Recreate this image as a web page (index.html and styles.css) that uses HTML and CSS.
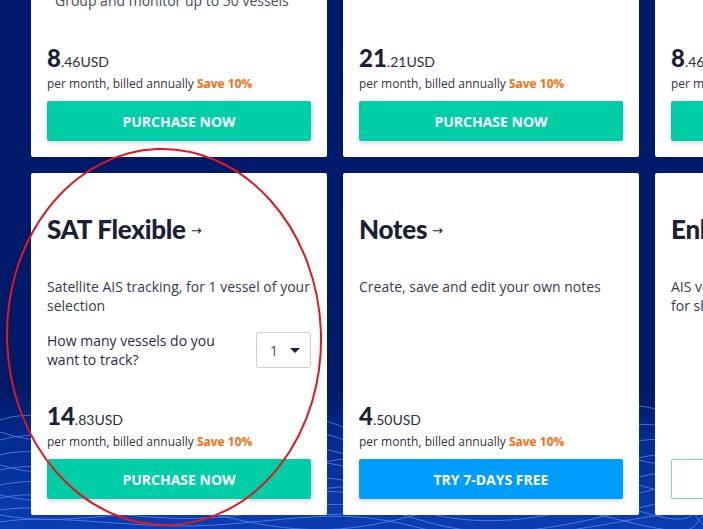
FILE: index.html
```html
<!DOCTYPE html>
<html lang="en">
<head>
<meta charset="utf-8">
<title>Plans</title>
<link rel="stylesheet" href="styles.css">
</head>
<body>
<div class="page">
  <svg class="waves" viewBox="0 0 703 529" preserveAspectRatio="none" aria-hidden="true">
    <defs>
      <linearGradient id="bg" x1="0" y1="0" x2="0" y2="1">
        <stop offset="0" stop-color="#001a6a"/>
        <stop offset="0.74" stop-color="#001a6a"/>
        <stop offset="0.84" stop-color="#042c92"/>
        <stop offset="1" stop-color="#0c3db0"/>
      </linearGradient>
    </defs>
    <rect x="0" y="0" width="703" height="529" fill="url(#bg)"/>
    <g fill="none" stroke="#6a98ff" stroke-width="0.9" opacity="0.7">
      <path d="M0 420 C60 400 110 450 170 430 S280 400 350 430 S480 460 560 425 S660 410 703 430"/>
      <path d="M0 440 C70 420 120 470 190 445 S300 420 370 450 S500 470 580 440 S670 430 703 445"/>
      <path d="M0 455 C50 440 130 480 200 460 S310 440 380 465 S510 485 590 455 S680 445 703 460"/>
      <path d="M0 470 C60 455 140 495 210 475 S320 455 390 480 S520 500 600 470 S690 460 703 475"/>
      <path d="M0 485 C70 470 150 505 220 490 S330 470 400 495 S530 510 610 485 S690 478 703 490"/>
      <path d="M0 498 C60 485 140 515 230 502 S340 485 410 508 S540 520 620 498 S690 490 703 502"/>
      <path d="M0 510 C70 500 150 528 240 515 S350 498 420 520 S550 530 630 510 S690 505 703 515"/>
      <path d="M0 522 C60 512 140 532 230 524 S350 510 420 528 S550 534 630 520 S690 516 703 524"/>
      <path d="M0 432 C80 460 130 410 210 440 S330 470 400 440 S520 410 600 445 S680 460 703 440"/>
      <path d="M0 465 C80 490 140 445 220 470 S340 495 410 468 S530 445 610 475 S680 488 703 468"/>
      <path d="M0 495 C80 515 150 480 230 500 S350 520 420 497 S540 478 620 505 S690 515 703 498"/>
      <path d="M0 515 C80 530 150 500 230 518 S350 532 420 514 S540 500 620 520 S690 528 703 516"/>
    </g>
  </svg>

  <div class="grid">
    <!-- Row 1 -->
    <div class="card">
      <ul class="features"><li>Group and monitor up to 50 vessels</li></ul>
      <div class="pricing">
        <div class="price"><span class="int">8</span><span class="dec">.46USD</span></div>
        <div class="billing">per month, billed annually <strong class="save">Save 10%</strong></div>
        <button class="btn btn-green">PURCHASE NOW</button>
      </div>
    </div>
    <div class="card">
      <ul class="features"><li>&nbsp;</li></ul>
      <div class="pricing">
        <div class="price"><span class="int">21</span><span class="dec">.21USD</span></div>
        <div class="billing">per month, billed annually <strong class="save">Save 10%</strong></div>
        <button class="btn btn-green">PURCHASE NOW</button>
      </div>
    </div>
    <div class="card">
      <ul class="features"><li>&nbsp;</li></ul>
      <div class="pricing">
        <div class="price"><span class="int">8</span><span class="dec">.46USD</span></div>
        <div class="billing">per month, billed annually <strong class="save">Save 10%</strong></div>
        <button class="btn btn-green">PURCHASE NOW</button>
      </div>
    </div>

    <!-- Row 2 -->
    <div class="card">
      <h2 class="title">SAT Flexible<span class="arrow">→</span></h2>
      <p class="desc">Satellite AIS tracking, for 1 vessel of your selection</p>
      <div class="question">
        <span class="q-text">How many vessels do you want to track?</span>
        <div class="select"><span class="sel-val">1</span><span class="caret"></span></div>
      </div>
      <div class="pricing">
        <div class="price"><span class="int">14</span><span class="dec">.83USD</span></div>
        <div class="billing">per month, billed annually <strong class="save">Save 10%</strong></div>
        <button class="btn btn-green">PURCHASE NOW</button>
      </div>
    </div>
    <div class="card">
      <h2 class="title">Notes<span class="arrow">→</span></h2>
      <p class="desc">Create, save and edit your own notes</p>
      <div class="pricing">
        <div class="price"><span class="int">4</span><span class="dec">.50USD</span></div>
        <div class="billing">per month, billed annually <strong class="save">Save 10%</strong></div>
        <button class="btn btn-blue">TRY 7-DAYS FREE</button>
      </div>
    </div>
    <div class="card">
      <h2 class="title">Enhanced Data<span class="arrow">→</span></h2>
      <p class="desc">AIS vessel details and data<br>for shipping companies</p>
      <div class="pricing">
        <button class="btn btn-outline">CONTACT US</button>
      </div>
    </div>
  </div>

  <svg class="annotation" viewBox="0 0 703 529" aria-hidden="true">
    <ellipse cx="164" cy="337" rx="157" ry="188" transform="rotate(-2 164 337)" fill="none" stroke="#e8141c" stroke-width="2"/>
  </svg>
</div>
</body>
</html>
```

FILE: styles.css
```css
html, body {
  margin: 0;
  padding: 0;
  width: 703px;
  height: 529px;
  overflow: hidden;
  background: #001a6a;
}

.page {
  position: relative;
  width: 703px;
  height: 529px;
  overflow: hidden;
  font-family: "Open Sans", "Liberation Sans", sans-serif;
}

.waves {
  position: absolute;
  left: 0;
  top: 0;
  width: 703px;
  height: 529px;
  z-index: 0;
}

.annotation {
  position: absolute;
  left: 0;
  top: 0;
  width: 703px;
  height: 529px;
  z-index: 2;
  pointer-events: none;
}

.grid {
  position: relative;
  z-index: 1;
  display: grid;
  grid-template-columns: repeat(3, 296px);
  grid-template-rows: 209px 342px;
  column-gap: 16px;
  row-gap: 16px;
  margin: -52px 0 0 31px;
  width: 920px;
}

.card {
  background: #fff;
  border-radius: 2px;
  padding: 40px 16px 16px;
  display: flex;
  flex-direction: column;
  min-width: 0;
  overflow: hidden;
}

.features {
  margin: 3px 0 0;
  padding: 0 0 0 8px;
  list-style: none;
  font-size: 14px;
  line-height: 19px;
  color: #4a4a5a;
}

.title {
  margin: 0;
  font-family: "Lato", "Liberation Sans", sans-serif;
  font-weight: 900;
  font-size: 26px;
  line-height: 32px;
  color: #1b2036;
  white-space: nowrap;
  letter-spacing: -0.3px;
}

.arrow {
  font-family: "DejaVu Sans", sans-serif;
  font-weight: 400;
  font-size: 13px;
  margin-left: 5px;
  position: relative;
  top: -4px;
  color: #1b2036;
}

.desc {
  margin: 26px 0 0;
  font-size: 14px;
  line-height: 19px;
  color: #3b3b4d;
}

.question {
  margin-top: 16px;
  display: flex;
  align-items: center;
  justify-content: space-between;
  gap: 16px;
}

.q-text {
  font-size: 14px;
  line-height: 19px;
  color: #32284f;
  width: 180px;
}

.select {
  height: 34px;
  width: 30px;
  border: 1px solid #cfcfd4;
  border-radius: 2px;
  display: flex;
  align-items: center;
  justify-content: space-between;
  padding: 0 10px 0 13px;
}

.sel-val {
  font-size: 14px;
  color: #4a4a5a;
}

.caret {
  width: 0;
  height: 0;
  border-left: 5px solid transparent;
  border-right: 5px solid transparent;
  border-top: 5px solid #1b2036;
}

.pricing {
  margin-top: auto;
  display: flex;
  flex-direction: column;
}

.price {
  font-family: "Lato", "Liberation Sans", sans-serif;
  line-height: 28px;
  height: 28px;
  color: #1b2036;
  white-space: nowrap;
}

.int {
  font-weight: 900;
  font-size: 24px;
}

.dec {
  font-weight: 400;
  font-size: 14px;
  color: #2e2e40;
}

.billing {
  margin-top: 4px;
  font-size: 12px;
  line-height: 16px;
  color: #333344;
  white-space: nowrap;
}

.save {
  color: #ff6d0a;
  font-weight: 700;
}

.btn {
  margin-top: 9px;
  height: 40px;
  border: none;
  border-radius: 2px;
  font-family: "Open Sans", "Liberation Sans", sans-serif;
  font-weight: 700;
  font-size: 14px;
  color: #fff;
  box-shadow: 0 2px 4px rgba(0, 20, 80, 0.18);
  padding: 0;
  width: 100%;
}

.btn-green {
  background: #00cea6;
}

.btn-blue {
  background: #009dff;
}

.btn-outline {
  background: #fff;
  border: 1px solid #6be0c6;
  color: #00b894;
  box-shadow: none;
}
```
